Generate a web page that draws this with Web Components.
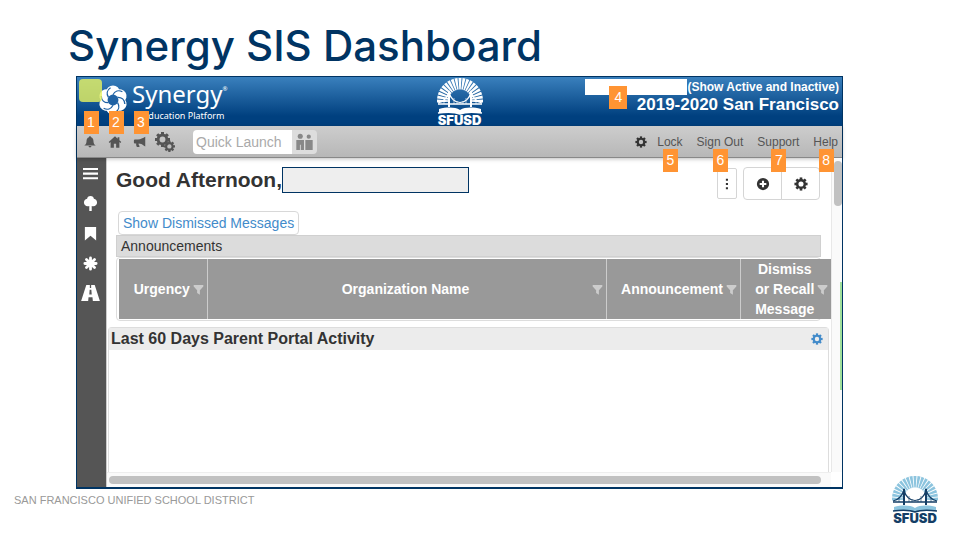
<!DOCTYPE html>
<html lang="en">
<head>
<meta charset="utf-8">
<title>Synergy SIS Dashboard</title>
<style>
  html, body {
    margin: 0;
    background: #fff;
    font-family: "Liberation Sans", Arial, sans-serif;
  }
</style>
</head>
<body>
<slide-page>
  <span slot="title">Synergy SIS Dashboard</span>
  <synergy-window>
    <synergy-header slot="header"></synergy-header>
    <synergy-toolbar slot="toolbar"></synergy-toolbar>
    <side-menu slot="side"></side-menu>
    <greeting-bar>Good Afternoon,</greeting-bar>
    <announcement-list></announcement-list>
    <widget-panel>Last 60 Days Parent Portal Activity</widget-panel>
  </synergy-window>
  <span slot="footer">SAN FRANCISCO UNIFIED SCHOOL DISTRICT</span>
</slide-page>

<script>
  function define(name, html) {
    customElements.define(name, class extends HTMLElement {
      constructor() {
        super();
        this.attachShadow({ mode: 'open' }).innerHTML = html;
      }
    });
  }

  // toothed wheel centred on cx, cy
  function gear(cx, cy, r) {
    let teeth = '';
    for (let a = 0; a < 360; a += 45) {
      teeth += `<rect x="${cx - r * 0.2}" y="${cy - r}" width="${r * 0.4}" height="${r * 0.4}" transform="rotate(${a} ${cx} ${cy})"/>`;
    }
    return `<circle cx="${cx}" cy="${cy}" r="${r * 0.58}" fill="none" stroke="currentColor" stroke-width="${r * 0.38}"/>${teeth}`;
  }

  // Synergy flower: six round petals parted by curved lines
  function swirl() {
    let petals = '';
    let lines = '';
    for (let a = 0; a < 360; a += 60) {
      petals += `<circle cx="8" cy="3.800" r="3.600" transform="rotate(${a} 8 8)"/>`;
      lines += `<path d="M8 5.200C9 3.200 11 2.600 13 3.600" transform="rotate(${a} 8 8)"/>`;
    }
    return `${petals}<circle cx="8" cy="8" r="2.900" fill="#1f62a4"/><g fill="none" stroke="#1f62a4" stroke-width=".7">${lines}</g>`;
  }

  const ICONS = {
    bell: '<path d="M8 1.5c.8 0 1.2.5 1.2 1.2 2 .6 2.7 2.2 2.8 4.6.1 2.300.9 3.500 2.500 4.700H1.500C3.100 10.800 3.900 9.600 4 7.300c.1-2.400.8-4 2.800-4.600C6.800 2 7.200 1.500 8 1.500zM6.300 12.700h3.400c-.2 2-3.200 2-3.400 0z"/>',
    home: '<path d="M8 1.500L.8 8l1 1.100L3 8v6.500h3.700V10h2.600v4.500H13V8l1.200 1.100 1-1.100-2.200-2V2.500h-2v1.700z"/>',
    horn: '<path d="M14 2v11l-1.500-.8C10.500 10.700 8.600 10 6.500 9.800c-.3 1.200.3 2.200 1.200 3-.7 1.200-2.700 1.200-3.400.5-.6-1.200-.9-2.300-.6-3.600H2.500C1.500 9.700 1 9 1 8.200V6.500C1 5.600 1.600 5 2.500 5h3.300C8.600 5 11.500 3.700 14 2z"/>',
    gears: gear(6, 6, 6) + gear(11.5, 11.5, 4.5),
    gear: gear(8, 8, 7.5),
    people: '<circle cx="4" cy="3" r="2.400"/><circle cx="12" cy="3.500" r="2"/><path d="M.3 6.500h7.200V16h-3V11h-.8v5H.3zM8.800 6.500h6.900V16H8.800z"/>',
    menu: '<path d="M0 2h16v2.200H0zM0 7h16v2.200H0zM0 12h16v2.200H0z"/>',
    tree: '<path d="M8 0c2.200 0 3.500 1.300 3.600 3C13.700 3.300 15 5 15 7s-1.600 4-4 4c-.7 0-1.200-.1-1.700-.4V16H6.700v-5.400c-.5.300-1 .4-1.700.4-2.400 0-4-2-4-4s1.300-3.700 3.400-4C4.500 1.300 5.800 0 8 0z"/>',
    bookmark: '<path d="M2 1h12v14.500l-6-5-6 5z"/>',
    asterisk: '<path stroke="currentColor" stroke-width="3" stroke-linecap="round" d="M8 2v12M2 8h12M3.700 3.700l8.600 8.600M12.300 3.700l-8.600 8.600"/>',
    road: '<path fill-rule="evenodd" d="M3.500-1h9L18 16h-7.500l-.4-4H5.900l-.4 4H-2zM7.300-1v3h1.400v-3zM7.100 4L6.700 9h2.600L8.900 4z"/>',
    plus: '<path fill-rule="evenodd" d="M8 1a7 7 0 1 1 0 14A7 7 0 0 1 8 1zM6.800 4.200v2.600H4.200v2.400h2.600v2.600h2.400V9.200h2.600V6.800H9.200V4.200z"/>',
    dots: '<path d="M6.500 1h2.800v2.800H6.500zM6.500 6.600h2.800v2.800H6.500zM6.500 12.200h2.800V15H6.500z"/>',
    filter: '<path d="M1 1.500h14v2L10 9v6.500L6 13V9L1 3.500z"/>',
    swirl: swirl()
  };

  // <ui-icon name="gear">, sized with --size
  customElements.define('ui-icon', class extends HTMLElement {
    constructor() {
      super();
      this.attachShadow({ mode: 'open' });
    }
    connectedCallback() {
      this.shadowRoot.innerHTML = `
        <style>
          :host { display: inline-flex; flex: none; width: var(--size, 14px); height: var(--size, 14px); }
          svg { width: 100%; height: 100%; overflow: visible; }
        </style>
        <svg viewBox="0 0 16 16" fill="currentColor" aria-hidden="true">${ICONS[this.getAttribute('name')]}</svg>`;
    }
  });

  // numbered marker that sits over the control it belongs to
  define('call-out', `
    <style>
      :host {
        position: absolute;
        z-index: 5;
        box-sizing: border-box;
        width: 15px;
        height: 23px;
        background: #ff9433;
        color: #fff;
        font-size: 14px;
        line-height: 23px;
        text-align: center;
      }
    </style>
    <slot></slot>`);

  let rays = '';
  for (let a = -90; a <= 90; a += 10) {
    rays += `<path d="M22.300 12.500L21.500 1h3l-.8 11.500z" transform="rotate(${a} 23 24)"/>`;
  }
  define('sfusd-logo', `
    <style>
      :host { display: flex; flex-direction: column; align-items: center; color: var(--ink, #143e66); }
      svg { display: block; width: 46px; height: 38px; }
      b { font: 900 13px/11px Inter, sans-serif; }
    </style>
    <svg viewBox="0 0 46 38" aria-hidden="true">
      <g fill="var(--rays, #8cc4de)">${rays}
        <path d="M2 32c8-2 16-2 21 1 5-3 13-3 21-1v4c-8-1-16-1-21 1-5-2-13-2-21-1z"/>
      </g>
      <g fill="none" stroke="currentColor">
        <path stroke-width="2" d="M12 14v16M34 14v16"/>
        <path stroke-width="1.500" d="M1 27h44"/>
        <path stroke-width="1.200" d="M1 26c5-1 9-5 11-11 3 14 19 14 22 0 2 6 6 10 11 11"/>
        <path stroke-width=".6" d="M7 22v5M17 21v6M20 24v3M26 24v3M29 21v6M39 22v5"/>
        <path stroke-width="1.500" d="M1 36c8-1 17-1 22 1 5-2 14-2 22-1"/>
      </g>
    </svg>
    <b>SFUSD</b>`);

  define('slide-page', `
    <style>
      :host { display: flex; flex-direction: column; min-height: 100vh; box-sizing: border-box; padding-top: 15px; }
      h1 { margin: 0 68px; font: 500 42px/61px Inter, sans-serif; color: #003463; }
      main { margin: 0 117px 0 76px; }
      footer {
        display: flex;
        justify-content: space-between;
        align-items: flex-start;
        padding: 4px 22px 0 14px;
        font-size: 11px;
        line-height: 14px;
        color: #999;
      }
      sfusd-logo { margin-top: -18px; }
    </style>
    <h1><slot name="title"></slot></h1>
    <main><slot></slot></main>
    <footer><slot name="footer"></slot><sfusd-logo></sfusd-logo></footer>`);

  define('synergy-window', `
    <style>
      :host { display: block; border: 1px solid #003463; border-bottom-width: 2px; color: #333; }
      .body { display: grid; grid-template-columns: 30px minmax(0, 1fr) 11px; grid-template-rows: auto 15px; }
      .side { grid-row: 1 / 3; background: #555; border-right: 1px solid #ccc; }
      .content { overflow: hidden; }
      .vertical { position: relative; background: #fafafa; border-left: 1px solid #e8e8e8; padding: 3px 0 0 2px; }
      .vertical i { display: block; height: 45px; border-radius: 4px; background: #c1c1c1; }
      .status { position: absolute; right: 0; top: 124px; width: 2px; height: 108px; background: #a0e09b; }
      .horizontal { background: #fafafa; border-top: 1px solid #eee; padding: 3px 10px 0 2px; }
      .horizontal i { display: block; height: 8px; border-radius: 4px; background: #c1c1c1; }
    </style>
    <slot name="header"></slot>
    <slot name="toolbar"></slot>
    <div class="body">
      <div class="side"><slot name="side"></slot></div>
      <div class="content"><slot></slot></div>
      <div class="vertical"><i></i><div class="status"></div></div>
      <div class="horizontal"><i></i></div>
    </div>`);

  define('synergy-header', `
    <style>
      :host {
        display: grid;
        grid-template-columns: 1fr auto 1fr;
        height: 49px;
        background: linear-gradient(#3a80bd, #00407f 80%);
        color: #fff;
      }
      .brand { position: relative; display: flex; padding-left: 21px; }
      .brand ui-icon { --size: 30px; margin-top: 8px; }
      .mark { position: absolute; left: 2px; top: 2px; width: 23px; height: 23px; border-radius: 4px; background: #e9f25fcc; }
      .name { padding: 1px 0 0 4px; font-family: "Noto Sans", sans-serif; text-align: right; }
      .name div { font-size: 24px; line-height: 32px; }
      .name sup { font-size: 6px; line-height: 6px; vertical-align: 12px; }
      .name small { display: block; padding-right: 3px; font-size: 9px; line-height: 12px; }
      sfusd-logo { --ink: #fff; --rays: #fff; }
      .account { text-align: right; padding: 2px 3px 0 0; font-weight: bold; }
      .who { display: flex; justify-content: flex-end; font-size: 12px; line-height: 17px; }
      .redacted { position: relative; width: 102px; height: 16px; background: #fff; }
      .year { font-size: 17px; line-height: 18px; }
      call-out { left: 24px; top: 7px; width: 18px; font-weight: normal; }
    </style>
    <div class="brand">
      <ui-icon name="swirl"></ui-icon>
      <div class="mark"></div>
      <div class="name"><div>Synergy<sup>®</sup></div><small>ducation Platform</small></div>
    </div>
    <sfusd-logo></sfusd-logo>
    <div class="account">
      <div class="who"><div class="redacted"><call-out>4</call-out></div>(Show Active and Inactive)</div>
      <div class="year">2019-2020 San Francisco</div>
    </div>`);

  define('synergy-toolbar', `
    <style>
      :host {
        position: relative;
        display: flex;
        align-items: center;
        height: 32px;
        box-sizing: border-box;
        background: linear-gradient(#cdcdcd, #b7b7b7);
        border-bottom: 1px solid #888;
        box-shadow: 0 1px 4px #0004;
        color: #555;
      }
      .item { position: relative; display: flex; justify-content: center; }
      button { display: flex; align-items: center; justify-content: center; border: 0; padding: 0; background: none; color: inherit; width: 25px; height: 24px; }
      .gears { --size: 20px; }
      .item call-out { left: calc(50% - 6px); top: -19px; }
      .search { display: flex; height: 24px; margin-left: 16px; border-radius: 4px; overflow: hidden; }
      input { width: 99px; box-sizing: border-box; border: 0; padding: 0 3px; font: 14px "Liberation Sans", sans-serif; }
      input::placeholder { color: #aaa; }
      .search button { background: #ddd; color: #888; --size: 17px; }
      nav { display: flex; align-items: center; gap: 14px; margin-left: auto; padding-right: 4px; font-size: 12px; line-height: 24px; }
      nav button { width: 12px; color: #333; --size: 12px; margin-right: -4px; }
      nav a { color: #555; text-decoration: none; }
      nav .item call-out { top: 19px; left: calc(50% - 7px); }
    </style>
    <div class="item"><button aria-label="Notifications"><ui-icon name="bell"></ui-icon></button><call-out>1</call-out></div>
    <div class="item"><button aria-label="Home"><ui-icon name="home"></ui-icon></button><call-out>2</call-out></div>
    <div class="item"><button aria-label="Streams"><ui-icon name="horn"></ui-icon></button><call-out>3</call-out></div>
    <button class="gears" aria-label="Tools"><ui-icon name="gears"></ui-icon></button>
    <div class="search">
      <input type="text" placeholder="Quick Launch" aria-label="Quick Launch">
      <button aria-label="Find people"><ui-icon name="people"></ui-icon></button>
    </div>
    <nav>
      <button aria-label="Preferences"><ui-icon name="gear"></ui-icon></button>
      <div class="item"><a href="#lock">Lock</a><call-out>5</call-out></div>
      <div class="item"><a href="#signout">Sign Out</a><call-out>6</call-out></div>
      <div class="item"><a href="#support">Support</a><call-out>7</call-out></div>
      <div class="item"><a href="#help">Help</a><call-out>8</call-out></div>
    </nav>`);

  define('side-menu', `
    <style>
      :host { display: flex; flex-direction: column; color: #fff; }
      button { display: flex; align-items: center; justify-content: center; height: 30px; padding: 0 3px 0 0; border: 0; background: none; color: inherit; --size: 15px; }
    </style>
    <button aria-label="Menu"><ui-icon name="menu"></ui-icon></button>
    <button aria-label="Navigation tree"><ui-icon name="tree"></ui-icon></button>
    <button aria-label="Bookmarks"><ui-icon name="bookmark"></ui-icon></button>
    <button aria-label="Favorites"><ui-icon name="asterisk"></ui-icon></button>
    <button aria-label="History"><ui-icon name="road"></ui-icon></button>`);

  define('greeting-bar', `
    <style>
      :host { display: flex; align-items: flex-start; padding: 9px 11px 0 9px; }
      h2 { display: flex; align-items: center; margin: 0; font-size: 21px; line-height: 26px; }
      .redacted { width: 187px; height: 26px; box-sizing: border-box; border: 1px solid #003463; background: #eee; }
      .actions { display: flex; align-items: center; gap: 6px; margin-left: auto; }
      button { display: flex; align-items: center; justify-content: center; box-sizing: border-box; padding: 0; border: 1px solid #d5d5d5; background: #fff; color: #333; }
      .more { width: 20px; height: 31px; border-radius: 2px; --size: 12px; }
      .group { display: flex; }
      .group button { width: 39px; height: 33px; border-radius: 4px 0 0 4px; }
      .group button + button { margin-left: -1px; border-radius: 0 4px 4px 0; }
    </style>
    <h2><slot></slot><span class="redacted"></span></h2>
    <div class="actions">
      <button class="more" aria-label="More"><ui-icon name="dots"></ui-icon></button>
      <div class="group">
        <button aria-label="Add"><ui-icon name="plus"></ui-icon></button>
        <button aria-label="Settings"><ui-icon name="gear"></ui-icon></button>
      </div>
    </div>`);

  define('announcement-list', `
    <style>
      :host { display: block; padding: 11px 0 0 9px; }
      .dismissed { display: block; height: 24px; margin-left: 2px; padding: 0 4px; border: 1px solid #d8d8d8; border-radius: 4px; background: #fff; color: #428bca; font: 14px "Liberation Sans", sans-serif; }
      h3 { margin: 0 10px 0 0; padding-left: 4px; border: 1px solid #d0d0d0; background: #dcdcdc; font-size: 14px; line-height: 20px; font-weight: normal; }
      .grid { margin-right: 10px; padding: 1px 0 1px 2px; border: 1px solid #ddd; border-radius: 4px; }
      table { width: calc(100% + 11px); table-layout: fixed; border-collapse: collapse; background: #999; color: #fff; }
      th { height: 60px; padding: 0 3px 0 12px; border-left: 1px solid #ccc; font-size: 14px; line-height: 20px; }
      th:first-child { border-left: 0; }
      th div { display: flex; align-items: center; }
      th span { flex: 1; }
      th ui-icon { --size: 11px; color: #ccc; }
    </style>
    <button class="dismissed">Show Dismissed Messages</button>
    <h3>Announcements</h3>
    <div class="grid">
      <table>
        <colgroup><col style="width: 88px"><col><col style="width: 134px"><col style="width: 91px"></colgroup>
        <thead>
          <tr>
            <th><div><span>Urgency</span><ui-icon name="filter"></ui-icon></div></th>
            <th><div><span>Organization Name</span><ui-icon name="filter"></ui-icon></div></th>
            <th><div><span>Announcement</span><ui-icon name="filter"></ui-icon></div></th>
            <th><div><span>Dismiss<br>or Recall<br>Message</span><ui-icon name="filter"></ui-icon></div></th>
          </tr>
        </thead>
      </table>
    </div>`);

  define('widget-panel', `
    <style>
      :host { display: block; margin: 6px 2px 0 1px; border: 1px solid #ddd; border-bottom: 0; border-radius: 4px 4px 0 0; }
      header { display: flex; align-items: center; justify-content: space-between; padding: 0 5px 0 2px; background: #ececec; }
      h3 { margin: 0; font-size: 16px; line-height: 22px; }
      button { display: flex; padding: 0; border: 0; background: none; color: #428bca; --size: 12px; }
      .chart { min-height: 122px; }
    </style>
    <header><h3><slot></slot></h3><button aria-label="Widget settings"><ui-icon name="gear"></ui-icon></button></header>
    <div class="chart"></div>`);
</script>
</body>
</html>
